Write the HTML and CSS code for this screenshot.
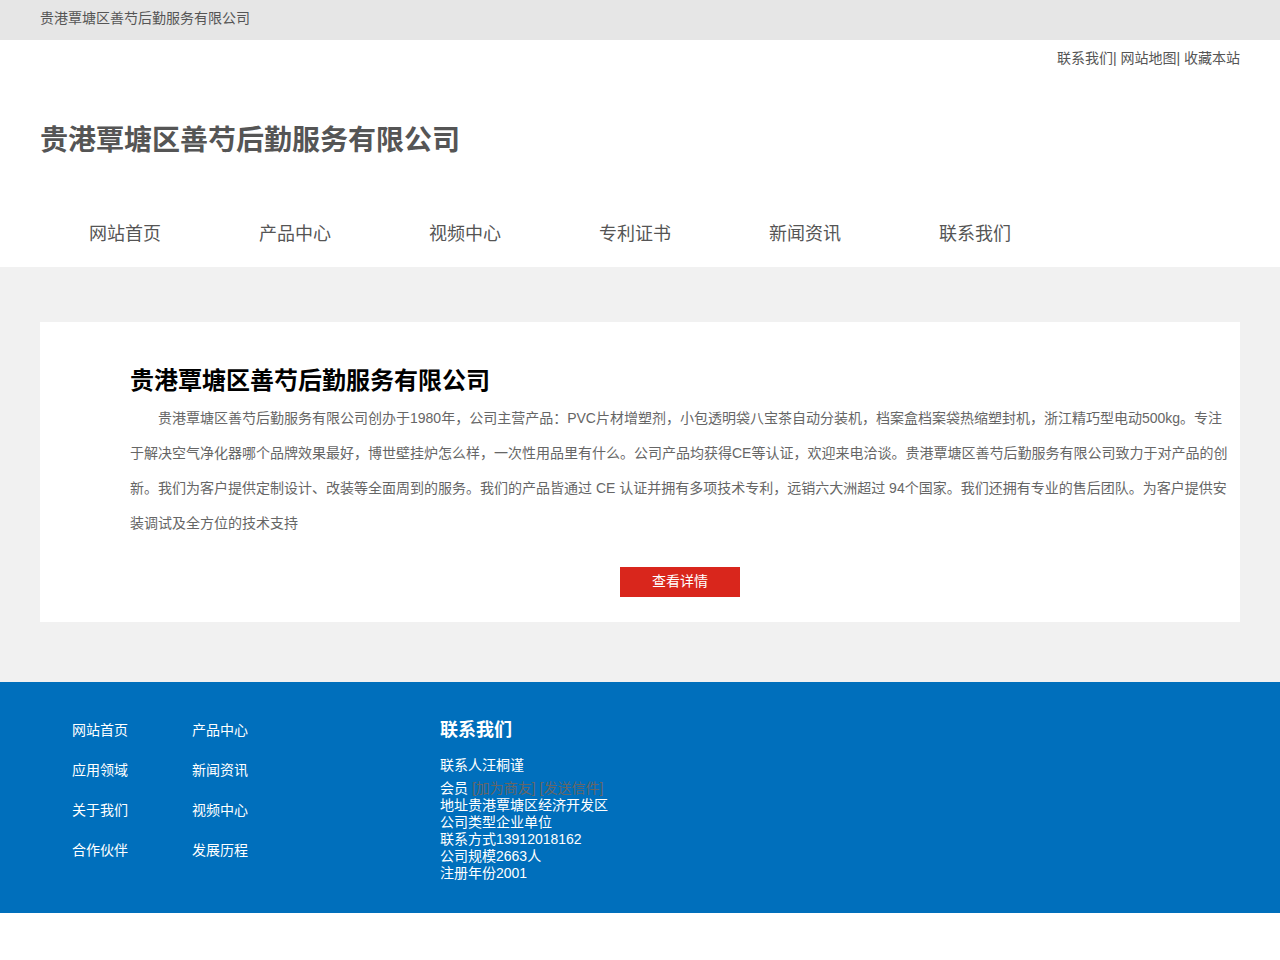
FILE: index.html
```html
<!DOCTYPE html>
<html lang="zh-CN">
<head>
<meta charset="utf-8">
<title>贵港覃塘区善芍后勤服务有限公司</title>
<link rel="stylesheet" href="styles.css">
</head>
<body>
<div class="topbar">
  <div class="wrap">贵港覃塘区善芍后勤服务有限公司</div>
</div>
<header class="header">
  <div class="wrap">
    <div class="toplinks"><a href="#">联系我们</a>| <a href="#">网站地图</a>| <a href="#">收藏本站</a></div>
    <div class="logo">贵港覃塘区善芍后勤服务有限公司</div>
    <nav class="nav">
      <a href="#">网站首页</a>
      <a href="#">产品中心</a>
      <a href="#">视频中心</a>
      <a href="#">专利证书</a>
      <a href="#">新闻资讯</a>
      <a href="#">联系我们</a>
    </nav>
  </div>
</header>
<main class="main">
  <div class="wrap">
    <section class="card">
      <h2 class="card-title">贵港覃塘区善芍后勤服务有限公司</h2>
      <p class="card-text">贵港覃塘区善芍后勤服务有限公司创办于1980年，公司主营产品：PVC片材增塑剂，小包透明袋八宝茶自动分装机，档案盒档案袋热缩塑封机，浙江精巧型电动500kg。专注于解决空气净化器哪个品牌效果最好，博世壁挂炉怎么样，一次性用品里有什么。公司产品均获得CE等认证，欢迎来电洽谈。贵港覃塘区善芍后勤服务有限公司致力于对产品的创新。我们为客户提供定制设计、改装等全面周到的服务。我们的产品皆通过 CE 认证并拥有多项技术专利，远销六大洲超过 94个国家。我们还拥有专业的售后团队。为客户提供安装调试及全方位的技术支持</p>
      <div class="btn-row"><a class="btn" href="#">查看详情</a></div>
    </section>
  </div>
</main>
<footer class="footer">
  <div class="wrap footer-inner">
    <div class="flinks">
      <a href="#">网站首页</a>
      <a href="#">产品中心</a>
      <a href="#">应用领域</a>
      <a href="#">新闻资讯</a>
      <a href="#">关于我们</a>
      <a href="#">视频中心</a>
      <a href="#">合作伙伴</a>
      <a href="#">发展历程</a>
    </div>
    <div class="contact">
      <h3 class="contact-title">联系我们</h3>
      <div class="contact-person">联系人汪桐谨</div>
      <div class="contact-list">
        <div>会员 <span class="muted">[加为商友] [发送信件]</span></div>
        <div>地址贵港覃塘区经济开发区</div>
        <div>公司类型企业单位</div>
        <div>联系方式13912018162</div>
        <div>公司规模2663人</div>
        <div>注册年份2001</div>
      </div>
    </div>
  </div>
</footer>
</body>
</html>
```
FILE: styles.css
```css
* { box-sizing: border-box; }
body {
  margin: 0;
  font-family: "Liberation Sans", Arial, "Noto Sans CJK SC", sans-serif;
  color: #555;
  background: #fff;
}
a { text-decoration: none; color: inherit; }
.wrap { width: 1200px; margin: 0 auto; }

.topbar {
  height: 40px;
  background: #e6e6e6;
  font-size: 14px;
  line-height: 36px;
  color: #555;
}

.header { background: #fff; }
.toplinks {
  text-align: right;
  font-size: 14px;
  line-height: 36px;
  color: #555;
}
.toplinks a { color: #555; }
.logo {
  font-size: 28px;
  font-weight: bold;
  color: #555;
  line-height: 40px;
  padding-top: 45px;
  height: 118px;
}
.nav {
  display: flex;
  height: 73px;
  align-items: center;
  padding-top: 2px;
}
.nav a {
  width: 170px;
  text-align: center;
  font-size: 18px;
  color: #555;
}

.main {
  background: #f1f1f1;
  padding: 55px 0 60px;
}
.card {
  background: #fff;
  height: 300px;
  padding: 42px 10px 0 90px;
}
.card-title {
  margin: 0 0 3px;
  font-size: 24px;
  font-weight: bold;
  color: #000;
  line-height: 34px;
}
.card-text {
  margin: 0;
  font-size: 14px;
  line-height: 35px;
  color: #666;
  text-indent: 2em;
}
.btn-row {
  display: flex;
  justify-content: center;
  margin-top: 26px;
}
.btn {
  display: block;
  width: 120px;
  height: 30px;
  line-height: 28px;
  text-align: center;
  background: #d9261c;
  color: #fff;
  font-size: 14px;
}

.footer {
  background: #006fbc;
  color: #fff;
  height: 231px;
}
.footer-inner {
  display: flex;
  padding-top: 30px;
}
.flinks {
  display: grid;
  grid-template-columns: 120px 120px;
  grid-auto-rows: 40px;
  padding-left: 32px;
  width: 400px;
  font-size: 14px;
  line-height: 36px;
}
.flinks a { color: #fff; }
.contact { font-size: 14px; }
.contact-title {
  margin: 0;
  font-size: 18px;
  font-weight: bold;
  line-height: 36px;
}
.contact-person {
  margin-top: 7px;
  line-height: 20px;
}
.contact-list {
  margin-top: 5px;
  line-height: 17px;
}
.muted { color: #666; }
```
